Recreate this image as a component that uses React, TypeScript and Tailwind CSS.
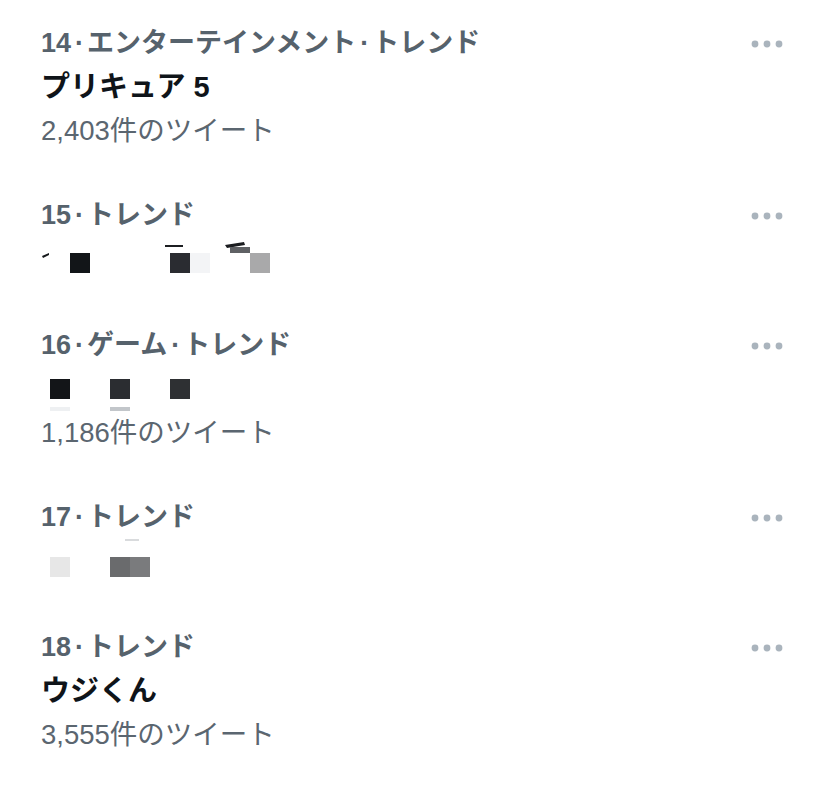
import React from "react";

type Trend = {
  rank: number;
  category?: string;
  title?: string;
  mosaic?: React.ReactNode;
  count?: string;
};

function Dots() {
  return (
    <svg width="32" height="10" viewBox="0 0 32 10" className="mt-[18px]">
      <circle cx="4" cy="5" r="3.4" fill="#aab4bd" />
      <circle cx="16" cy="5" r="3.4" fill="#aab4bd" />
      <circle cx="28" cy="5" r="3.4" fill="#aab4bd" />
    </svg>
  );
}

function Mosaic15() {
  return (
    <svg width="240" height="46" viewBox="0 0 240 46" className="block">
      <path d="M1 19 L8 16 L8 18 L2 21 Z" fill="#15181b" />
      <rect x="29" y="16" width="20" height="20" fill="#121518" />
      <rect x="124" y="8" width="18" height="2" fill="#1c1e21" />
      <rect x="129" y="16" width="20" height="20" fill="#2a2c31" />
      <rect x="149" y="16" width="20" height="20" fill="#f3f4f6" />
      <path d="M184 8 L203 5 L204 8 L186 11 Z" fill="#1a1c1f" />
      <rect x="189" y="10" width="20" height="6" fill="#5f6164" />
      <rect x="209" y="16" width="20" height="20" fill="#a9a9aa" />
    </svg>
  );
}

function Mosaic16() {
  return (
    <svg width="200" height="44" viewBox="0 0 200 44" className="block">
      <rect x="9" y="12" width="20" height="20" fill="#131518" />
      <rect x="69" y="12" width="20" height="20" fill="#2b2d31" />
      <rect x="129" y="12" width="20" height="20" fill="#2e3033" />
      <rect x="9" y="40" width="20" height="4" fill="#eef0f2" />
      <rect x="69" y="40" width="20" height="4" fill="#c2c6ca" />
    </svg>
  );
}

function Mosaic17() {
  return (
    <svg width="200" height="46" viewBox="0 0 200 46" className="block">
      <rect x="84" y="0" width="14" height="2" fill="#d9dbdd" />
      <rect x="9" y="18" width="20" height="20" fill="#e7e7e7" />
      <rect x="69" y="18" width="20" height="20" fill="#6a6b6d" />
      <rect x="89" y="18" width="20" height="20" fill="#7a7b7d" />
    </svg>
  );
}

const trends: Trend[] = [
  { rank: 14, category: "エンターテインメント", title: "プリキュア 5", count: "2,403" },
  { rank: 15, mosaic: <Mosaic15 /> },
  { rank: 16, category: "ゲーム", mosaic: <Mosaic16 />, count: "1,186" },
  { rank: 17, mosaic: <Mosaic17 /> },
  { rank: 18, title: "ウジくん", count: "3,555" },
];

function TrendRow({ t }: { t: Trend }) {
  return (
    <div className="flex justify-between pl-[41px] pr-[45px] py-5">
      <div className="flex flex-col">
        <div className="h-11 leading-[44px] text-[27px] text-[#56626c] font-semibold whitespace-nowrap">
          {t.rank}
          <span className="ml-[4px] mr-[3px]">·</span>
          {t.category && (
            <>
              {t.category}
              <span className="ml-[4px] mr-[3px]">·</span>
            </>
          )}
          トレンド
        </div>
        {t.title && (
          <div className="h-11 leading-[44px] text-[29px] font-bold text-[#0f1419]">
            {t.title}
          </div>
        )}
        {t.mosaic}
        {t.count && (
          <div className="h-11 leading-[44px] text-[27.5px] text-[#5b6670]">
            {t.count}件のツイート
          </div>
        )}
      </div>
      <Dots />
    </div>
  );
}

export default function App() {
  return (
    <div
      className="w-[828px] h-[787px] bg-white overflow-hidden pt-px"
      style={{ fontFamily: '"Liberation Sans", "Noto Sans CJK JP", sans-serif' }}
    >
      {trends.map((t) => (
        <TrendRow key={t.rank} t={t} />
      ))}
    </div>
  );
}
